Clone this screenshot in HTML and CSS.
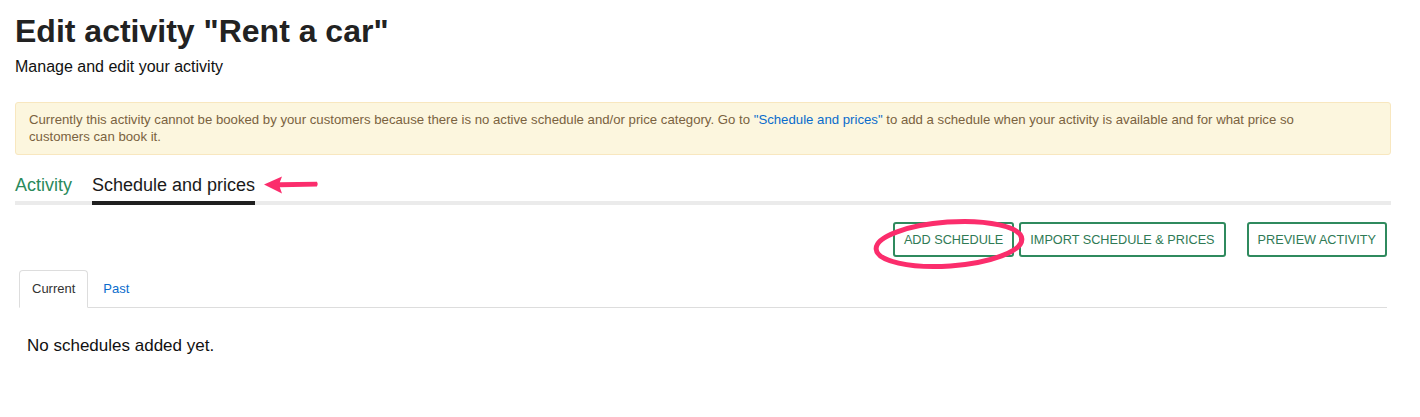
FILE: index.html
```html
<!DOCTYPE html>
<html lang="en">
<head>
<meta charset="utf-8">
<title>Edit activity</title>
<link rel="stylesheet" href="styles.css">
</head>
<body>
<div class="page">
  <header class="head">
    <h1 class="title">Edit activity "Rent a car"</h1>
    <p class="subtitle">Manage and edit your activity</p>
  </header>

  <div class="alert">Currently this activity cannot be booked by your customers because there is no active schedule and/or price category. Go to <a class="alert-link" href="#">"Schedule and prices"</a> to add a schedule when your activity is available and for what price so customers can book it.</div>

  <nav class="main-tabs">
    <a class="main-tab" href="#">Activity</a>
    <a class="main-tab active" href="#">Schedule and prices
      <svg class="arrow" width="56" height="20" viewBox="0 0 56 20"><path d="M1 9.5 L19 1.5 L16.8 7.3 L54 6.8 Q55.5 9 54 11.5 L16.8 12.3 L19 18.5 Z" fill="#fb2d6c"/></svg>
    </a>
  </nav>

  <div class="actions">
    <div class="btn-wrap">
      <button class="btn">ADD SCHEDULE</button>
      <svg class="ring" width="160" height="56" viewBox="0 0 160 56"><ellipse cx="80" cy="28" rx="73" ry="22" transform="rotate(-4 80 28)" fill="none" stroke="#fb2d6c" stroke-width="5"/></svg>
    </div>
    <button class="btn">IMPORT SCHEDULE &amp; PRICES</button>
    <button class="btn btn-far">PREVIEW ACTIVITY</button>
  </div>

  <div class="sub-tabs">
    <a class="sub-tab active" href="#">Current</a>
    <a class="sub-tab" href="#">Past</a>
  </div>

  <p class="empty">No schedules added yet.</p>
</div>
</body>
</html>
```
FILE: styles.css
```css
html, body {
  margin: 0;
  padding: 0;
  background: #fff;
}
body {
  font-family: "Liberation Sans", Arial, sans-serif;
  color: #222;
}
.page {
  padding: 0 29px 0 15px;
}
.head {
  padding-top: 12px;
}
.title {
  margin: 0;
  font-size: 32px;
  line-height: 38px;
  font-weight: bold;
  color: #222;
}
.subtitle {
  margin: 7px 0 0;
  font-size: 16px;
  line-height: 20px;
  color: #111;
}
.alert {
  margin-top: 25px;
  background: #fcf6de;
  border: 1px solid #f8e7bf;
  border-radius: 3px;
  padding: 8px 60px 9px 13px;
  font-size: 13.2px;
  line-height: 17px;
  color: #7a6240;
}
.alert-link {
  color: #0a6ccc;
  text-decoration: none;
}
.main-tabs {
  display: flex;
  gap: 20px;
  margin-top: 19px;
  border-bottom: 4px solid #ebebeb;
}
.main-tab {
  position: relative;
  font-size: 18px;
  line-height: 22px;
  padding-bottom: 5px;
  color: #2b8a5c;
  text-decoration: none;
  margin-bottom: -4px;
  border-bottom: 4px solid transparent;
}
.main-tab.active {
  color: #1a1a1a;
  border-bottom-color: #1f1f1f;
}
.arrow {
  position: absolute;
  left: calc(100% + 8px);
  top: 1px;
}
.actions {
  display: flex;
  justify-content: flex-end;
  align-items: center;
  gap: 5px;
  margin-top: 17px;
  padding-right: 4px;
}
.btn-wrap {
  position: relative;
}
.btn {
  display: block;
  height: 35px;
  padding: 0 9px;
  background: #fff;
  border: 2px solid #2f8a5e;
  border-radius: 3px;
  color: #2f7a55;
  font-family: "Liberation Sans", Arial, sans-serif;
  font-size: 12.7px;
}
.btn-far {
  margin-left: 16px;
}
.ring {
  position: absolute;
  left: -24px;
  top: -6px;
  pointer-events: none;
}
.sub-tabs {
  display: flex;
  margin: 13px 4px 0 4px;
  border-bottom: 1px solid #ddd;
}
.sub-tab {
  display: block;
  font-size: 13px;
  line-height: 18px;
  padding: 9px 12px 9px;
  color: #0a6ccc;
  text-decoration: none;
  border: 1px solid transparent;
  border-bottom: none;
  border-radius: 4px 4px 0 0;
  margin-bottom: -1px;
  margin-right: 2px;
}
.sub-tab.active {
  color: #333;
  background: #fff;
  border-color: #ddd;
  border-bottom: 1px solid #fff;
}
.empty {
  margin: 27px 0 0 12px;
  font-size: 17px;
  line-height: 22px;
  color: #111;
}
```
